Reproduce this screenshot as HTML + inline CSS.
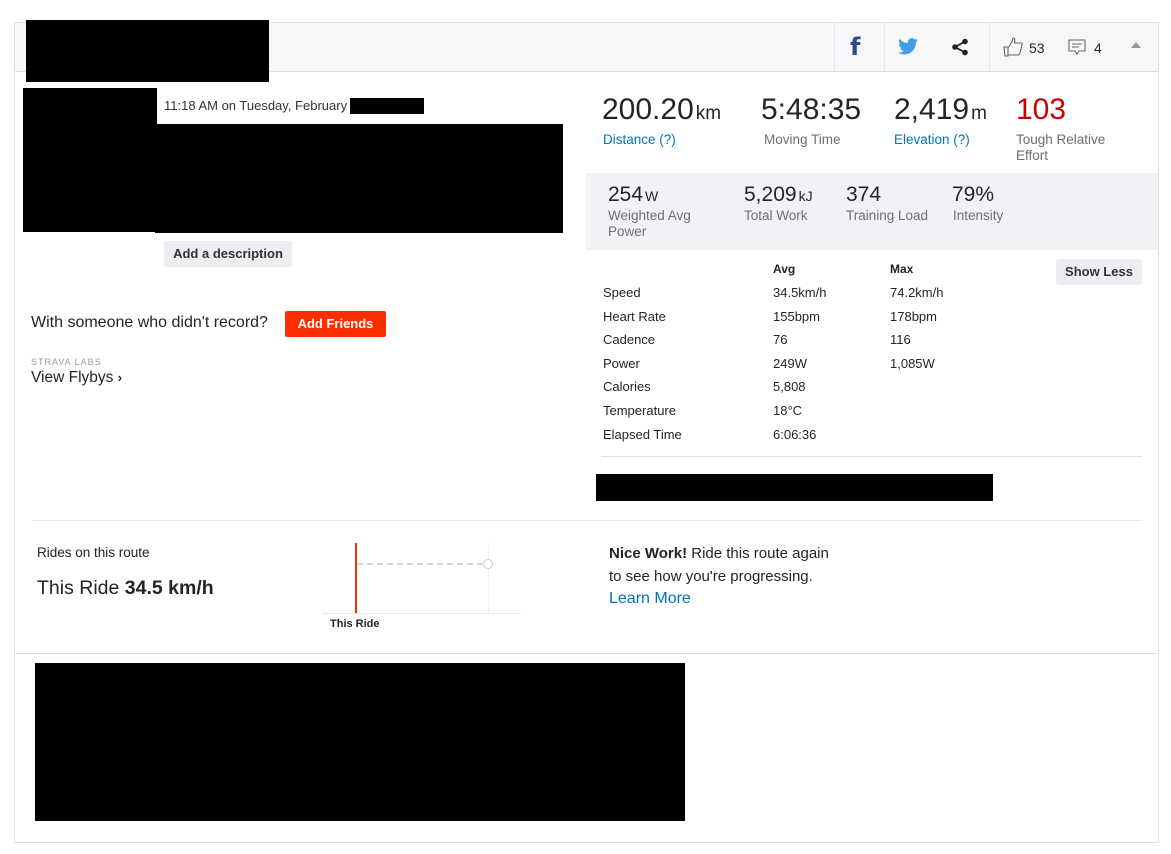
<!DOCTYPE html>
<html><head><meta charset="utf-8"><style>
*{margin:0;padding:0;box-sizing:border-box}
body{width:1171px;height:854px;background:#fff;font-family:"Liberation Sans",sans-serif;color:#242428;position:relative;overflow:hidden}
.a{position:absolute;white-space:nowrap}
.blk{position:absolute;background:#000}
.lbl{font-size:13.5px;color:#6d6d78}
.big{font-size:30px;color:#242428}
.big small{font-size:19px;margin-left:2px}
.mid{font-size:21px}
.mid small{font-size:14px;margin-left:2px}
.row{font-size:13px;color:#242428}
.blue{color:#0073bb}
</style></head><body>
<div class="a" style="left:14px;top:22px;width:1145px;height:821px;border:1px solid #dfdfe8"></div>
<div class="a" style="left:15px;top:23px;width:1143px;height:49px;background:#f7f7fa;border-bottom:1px solid #dfdfe8"></div>
<div class="a" style="left:834px;top:23px;width:1px;height:49px;background:#e6e6eb"></div>
<div class="a" style="left:884px;top:23px;width:1px;height:49px;background:#e6e6eb"></div>
<div class="a" style="left:989px;top:23px;width:1px;height:49px;background:#e6e6eb"></div>
<div class="a" style="left:850px;top:33px;font-size:24px;font-weight:bold;color:#2d4a8a;font-family:'DejaVu Sans',sans-serif">f</div>
<svg class="a" style="left:898px;top:38px" width="20" height="17" viewBox="0 0 24 20"><path fill="#3f9ee4" d="M24 2.4a10 10 0 0 1-2.8.8A5 5 0 0 0 23.3.5a10 10 0 0 1-3.1 1.2A4.9 4.9 0 0 0 11.8 6 14 14 0 0 1 1.7.9a4.9 4.9 0 0 0 1.5 6.6 5 5 0 0 1-2.2-.6 4.9 4.9 0 0 0 3.9 4.9 5 5 0 0 1-2.2.1 4.9 4.9 0 0 0 4.6 3.4A9.9 9.9 0 0 1 0 17.3 14 14 0 0 0 7.5 19.5c9 0 14-7.5 14-14v-.6A10 10 0 0 0 24 2.4z"/></svg>
<svg class="a" style="left:951px;top:38px" width="18" height="18" viewBox="0 0 18 18"><circle cx="14" cy="3.5" r="2.8" fill="#222"/><circle cx="4" cy="9" r="2.8" fill="#222"/><circle cx="14" cy="14.5" r="2.8" fill="#222"/><path d="M14 3.5L4 9l10 5.5" stroke="#222" stroke-width="1.8" fill="none"/></svg>
<svg class="a" style="left:1002px;top:36px" width="22" height="22" viewBox="0 0 22 22"><path d="M2 11h4v9H3zM6 12l4-6 1-4c2 0 2 2 1.5 5H19c1 0 1.5 1 1 2l-2 8c-.3 1-1 2-2 2H6" fill="none" stroke="#666" stroke-width="1.1"/></svg>
<div class="a" style="left:1029px;top:40px;font-size:14px">53</div>
<svg class="a" style="left:1068px;top:39px" width="18" height="18" viewBox="0 0 18 18"><path d="M1 1h16v11H11l-2 3-2-3H1z" fill="none" stroke="#666" stroke-width="1.1"/><path d="M4 5h10M4 8h7" stroke="#666"/></svg>
<div class="a" style="left:1094px;top:40px;font-size:14px">4</div>
<div class="a" style="left:1131px;top:42px;width:0;height:0;border-left:5px solid transparent;border-right:5px solid transparent;border-bottom:6px solid #999"></div>
<div class="blk" style="left:26px;top:20px;width:243px;height:62px"></div>

<div class="blk" style="left:23px;top:88px;width:134px;height:144px"></div>
<div class="a" style="left:164px;top:98px;font-size:13px;color:#333">11:18 AM on Tuesday, February</div>
<div class="blk" style="left:350px;top:98px;width:74px;height:16px"></div>
<div class="blk" style="left:155px;top:124px;width:408px;height:109px"></div>
<div class="a" style="left:164px;top:241px;width:128px;height:26px;background:#eeeef2;border-radius:3px;font-size:13px;font-weight:bold;line-height:26px;text-align:center;color:#333">Add a description</div>
<div class="a" style="left:31px;top:314px;font-size:16px">With someone who didn't record?</div>
<div class="a" style="left:285px;top:311px;width:101px;height:26px;background:#fc2e00;border-radius:2px;color:#fff;font-size:13px;font-weight:bold;line-height:26px;text-align:center">Add Friends</div>
<div class="a" style="left:31px;top:357px;font-size:9px;color:#999;letter-spacing:1px">STRAVA LABS</div>
<div class="a" style="left:31px;top:369px;font-size:15.5px">View Flybys <b style="font-size:13px">›</b></div>

<div class="a big" style="left:602px;top:93px">200.20<small>km</small></div>
<div class="a lbl blue" style="left:603px;top:132px">Distance (?)</div>
<div class="a big" style="left:761px;top:93px">5:48:35</div>
<div class="a lbl" style="left:764px;top:132px">Moving Time</div>
<div class="a big" style="left:894px;top:93px">2,419<small>m</small></div>
<div class="a lbl blue" style="left:894px;top:132px">Elevation (?)</div>
<div class="a big" style="left:1016px;top:93px;color:#c00">103</div>
<div class="a lbl" style="left:1016px;top:132px;line-height:16px">Tough Relative<br>Effort</div>

<div class="a" style="left:586px;top:173px;width:572px;height:77px;background:#f2f2f6"></div>
<div class="a mid" style="left:608px;top:183px">254<small>W</small></div>
<div class="a lbl" style="left:608px;top:208px;line-height:16px">Weighted Avg<br>Power</div>
<div class="a mid" style="left:744px;top:183px">5,209<small>kJ</small></div>
<div class="a lbl" style="left:744px;top:208px">Total Work</div>
<div class="a mid" style="left:846px;top:183px">374</div>
<div class="a lbl" style="left:846px;top:208px">Training Load</div>
<div class="a mid" style="left:952px;top:183px">79%</div>
<div class="a lbl" style="left:953px;top:208px">Intensity</div>

<div class="a row" style="left:773px;top:262px;font-size:12px;font-weight:bold">Avg</div>
<div class="a row" style="left:890px;top:262px;font-size:12px;font-weight:bold">Max</div>
<div class="a" style="left:1056px;top:259px;width:86px;height:26px;background:#eeeef2;border-radius:3px;font-size:13px;font-weight:bold;line-height:26px;text-align:center;color:#333">Show Less</div>
<div class="a row" style="left:603px;top:281px;line-height:23.6px">Speed<br>Heart Rate<br>Cadence<br>Power<br>Calories<br>Temperature<br>Elapsed Time</div>
<div class="a row" style="left:773px;top:281px;line-height:23.6px">34.5km/h<br>155bpm<br>76<br>249W<br>5,808<br>18°C<br>6:06:36</div>
<div class="a row" style="left:890px;top:281px;line-height:23.6px">74.2km/h<br>178bpm<br>116<br>1,085W</div>
<div class="a" style="left:601px;top:456px;width:541px;height:1px;background:#dfdfe8"></div>
<div class="blk" style="left:596px;top:474px;width:397px;height:27px"></div>

<div class="a" style="left:32px;top:520px;width:1110px;height:1px;background:#eaeaee"></div>
<div class="a" style="left:37px;top:545px;font-size:13.5px">Rides on this route</div>
<div class="a" style="left:37px;top:577px;font-size:19.5px">This Ride <b>34.5 km/h</b></div>
<div class="a" style="left:322px;top:613px;width:199px;height:1px;background:#e6e6eb"></div>
<div class="a" style="left:488px;top:543px;width:1px;height:70px;background:#f0f0f3"></div>
<div class="a" style="left:355px;top:543px;width:2px;height:70px;background:#fc2e00"></div>
<div class="a" style="left:357px;top:563px;width:126px;border-top:2px dashed #d6d6e0"></div>
<div class="a" style="left:483px;top:559px;width:10px;height:10px;border:1.5px solid #ccc;border-radius:50%;background:#fff"></div>
<div class="a" style="left:330px;top:618px;font-size:11px;font-weight:bold">This Ride</div>
<div class="a" style="left:609px;top:543px;font-size:15px;line-height:22.5px">
<b>Nice Work!</b> Ride this route again<br>to see how you're progressing.<br><span class="blue" style="font-size:16px">Learn More</span></div>

<div class="a" style="left:15px;top:653px;width:1143px;height:1px;background:#dfdfe8"></div>
<div class="blk" style="left:35px;top:663px;width:650px;height:158px"></div>
</body></html>
